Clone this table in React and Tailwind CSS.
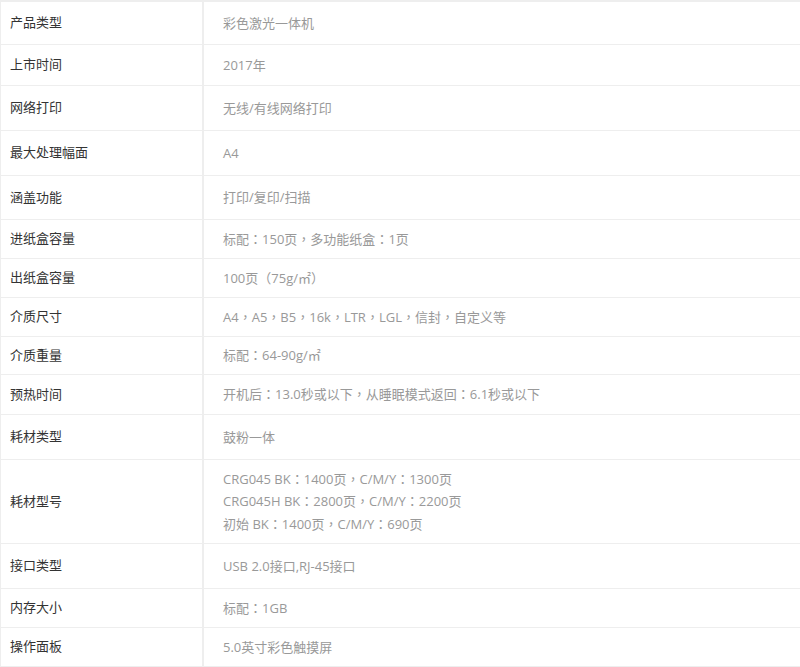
import React from 'react';

// Spec rows: [label, value(s), row height class incl. bottom border]
const rows = [
  ['产品类型', ['彩色激光一体机'], 'h-[43px]'],
  ['上市时间', ['2017年'], 'h-[41px]'],
  ['网络打印', ['无线/有线网络打印'], 'h-[45px]'],
  ['最大处理幅面', ['A4'], 'h-[45px]'],
  ['涵盖功能', ['打印/复印/扫描'], 'h-[44px]'],
  ['进纸盒容量', ['标配：150页，多功能纸盒：1页'], 'h-[39px]'],
  ['出纸盒容量', ['100页（75g/㎡）'], 'h-[39px]'],
  ['介质尺寸', ['A4，A5，B5，16k，LTR，LGL，信封，自定义等'], 'h-[39px]'],
  ['介质重量', ['标配：64-90g/㎡'], 'h-[38px]'],
  ['预热时间', ['开机后：13.0秒或以下，从睡眠模式返回：6.1秒或以下'], 'h-[40px]'],
  ['耗材类型', ['鼓粉一体'], 'h-[45px]'],
  [
    '耗材型号',
    [
      'CRG045 BK：1400页，C/M/Y：1300页',
      'CRG045H BK：2800页，C/M/Y：2200页',
      '初始 BK：1400页，C/M/Y：690页',
    ],
    'h-[84px]',
  ],
  ['接口类型', ['USB 2.0接口,RJ-45接口'], 'h-[45px]'],
  ['内存大小', ['标配：1GB'], 'h-[39px]'],
  ['操作面板', ['5.0英寸彩色触摸屏'], 'h-[39px]'],
];

// full-width colon/comma sit centred in the original, like a TC font draws them
const renderValue = (text) =>
  text.split(/([：，（）])/).map((part, i) =>
    /^[：，（）]$/.test(part) ? (
      <span key={i} className="font-['Noto_Sans_CJK_TC',sans-serif]">
        {part}
      </span>
    ) : (
      part
    )
  );

const App = () => {
  return (
    <div className="w-[800px] bg-white border-t-2 border-l border-[#eeeeee] text-[13px] font-['Open_Sans','Noto_Sans_CJK_SC',sans-serif]">
      {rows.map(([label, values, h]) => (
        <div key={label} className={`flex border-b border-[#eeeeee] ${h}`}>
          <div className="w-[203px] shrink-0 border-r-2 border-[#eeeeee] pl-[9px] flex items-center text-[#333333]">
            {label}
          </div>
          <div className="flex-1 pl-[19px] flex flex-col justify-center text-[#999999] leading-[22.5px]">
            {values.map((v) => (
              <div key={v}>{renderValue(v)}</div>
            ))}
          </div>
        </div>
      ))}
    </div>
  );
};

export default App;
